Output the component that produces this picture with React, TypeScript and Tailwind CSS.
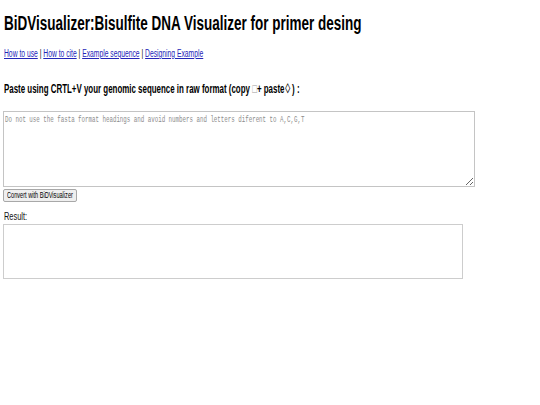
import type { ReactNode } from "react";

function Sq({ children, narrow = false }: { children: ReactNode; narrow?: boolean }) {
  return (
    <span className={"inline-block origin-left whitespace-nowrap " + (narrow ? "scale-x-[0.634]" : "scale-x-[0.675]")}>
      {children}
    </span>
  );
}

export default function App() {
  const sans = { fontFamily: '"Liberation Sans", Arial, sans-serif' };
  const link = "text-[#2424b8] underline";
  return (
    <div className="w-[540px] h-[405px] bg-white text-black overflow-hidden" style={sans}>
      <div className="px-[4px] pt-[12px]">
        <h1 className="text-[20px] leading-[22px] font-bold">
          <Sq>BiDVisualizer:Bisulfite DNA Visualizer for primer desing</Sq>
        </h1>
        <div className="mt-[14px] text-[10px] leading-[12px]">
          <Sq>
            <a className={link} href="#">How to use</a> | <a className={link} href="#">How to cite</a> | <a className={link} href="#">Example sequence</a> | <a className={link} href="#">Designing Example</a>
          </Sq>
        </div>
        <div className="mt-[22px] text-[12.5px] leading-[15px] font-bold">
          <Sq narrow>
            Paste using CRTL+V your genomic sequence in raw format (copy <span className="font-normal text-[#a0a0a0]">□</span>+ paste<span className="font-bold">♢</span>) :
          </Sq>
        </div>
      </div>
      <div className="px-[3px] mt-[14px]">
        <div className="relative w-[472px] h-[76px]">
          <textarea
            aria-label="sequence"
            className="block w-full h-full border border-[#c4c4c4] bg-white resize-y outline-none"
          />
          <span
            className="pointer-events-none absolute left-[2px] top-[4px] text-[8.6px] leading-[10px] text-[#8c8c8c]"
            style={{ fontFamily: '"Liberation Mono", "DejaVu Sans Mono", monospace' }}
          >
            <Sq>Do not use the fasta format headings and avoid numbers and letters diferent to A,C,G,T</Sq>
          </span>
        </div>
        <button className="mt-[2px] flex items-center h-[13px] w-[74px] px-[3px] border border-[#a8a8a8] rounded-[2px] bg-[#efefef] text-[8.3px] leading-[11px] text-black overflow-hidden">
          <Sq>Convert with BiDVisualizer</Sq>
        </button>
        <div className="mt-[8px] text-[11px] leading-[13px] pl-[1px] text-[#111111]">
          <Sq>Result:</Sq>
        </div>
        <div className="mt-[1px] w-[460px] h-[55px] border border-[#cdcdcd]" />
      </div>
    </div>
  );
}
